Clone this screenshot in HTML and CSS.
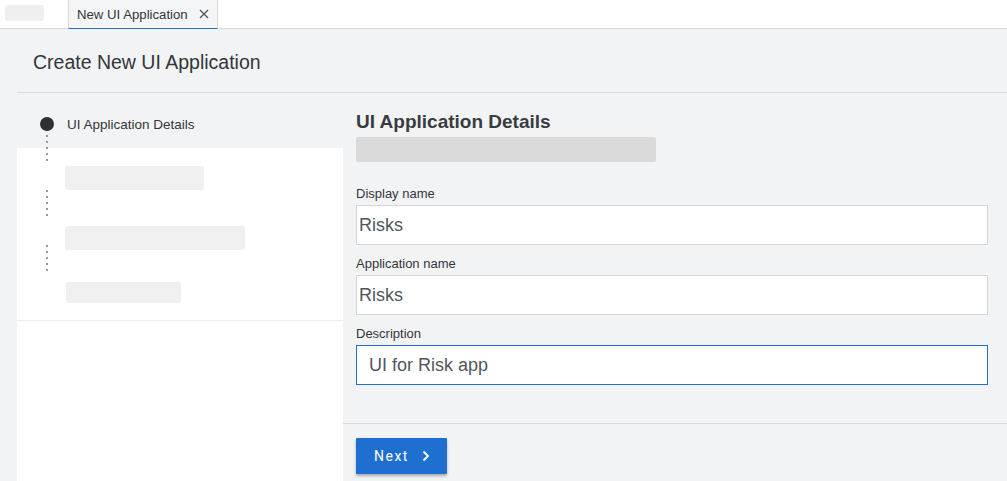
FILE: index.html
```html
<!DOCTYPE html>
<html lang="en">
<head>
<meta charset="utf-8">
<title>Create New UI Application</title>
<link rel="stylesheet" href="styles.css">
</head>
<body>
  <header class="topbar">
    <div class="logo-ph"></div>
    <div class="tab">
      <span class="tab-label">New UI Application</span>
      <svg class="tab-close" width="10" height="10" viewBox="0 0 10 10"><path d="M1 1L9 9M9 1L1 9" stroke="#555" stroke-width="1.3" fill="none"/></svg>
    </div>
  </header>

  <div class="page-head">
    <h1 class="page-title">Create New UI Application</h1>
  </div>

  <main class="main">
    <aside class="steps">
      <div class="step-head">
        <span class="step-dot"></span>
        <span class="step-label">UI Application Details</span>
      </div>
      <div class="step-body">
        <div class="ph ph-1"></div>
        <div class="ph ph-2"></div>
        <div class="ph ph-3"></div>
      </div>
      <div class="step-rest"></div>
      <div class="rail">
        <span class="rail-seg"></span>
        <span class="rail-seg"></span>
        <span class="rail-seg"></span>
      </div>
    </aside>

    <section class="content">
      <div class="form">
        <h2 class="form-title">UI Application Details</h2>
        <div class="ph-sub"></div>
        <div class="field first">
          <label class="label">Display name</label>
          <div class="input">Risks</div>
        </div>
        <div class="field">
          <label class="label">Application name</label>
          <div class="input">Risks</div>
        </div>
        <div class="field">
          <label class="label">Description</label>
          <div class="input focused">UI for Risk app</div>
        </div>
      </div>
      <div class="actions">
        <button class="btn-next">Next
          <svg width="8" height="12" viewBox="0 0 8 12"><path d="M1.5 1.5L6 6L1.5 10.5" stroke="#fff" stroke-width="1.8" fill="none"/></svg>
        </button>
      </div>
    </section>
  </main>
</body>
</html>
```

FILE: styles.css
```css
* { box-sizing: border-box; }
html, body { height: 100%; }
body {
  margin: 0;
  background: #f2f3f5;
  font-family: "Liberation Sans", Arial, sans-serif;
  color: #32363a;
  display: flex;
  flex-direction: column;
  height: 100vh;
  overflow: hidden;
}

.topbar {
  height: 29px;
  flex: none;
  background: #fff;
  border-bottom: 1px solid #d9d9d9;
  display: flex;
  align-items: flex-start;
  padding-left: 5px;
}
.logo-ph {
  width: 39px;
  height: 16px;
  margin-top: 5px;
  background: #efefef;
  border-radius: 3px;
  margin-right: 24px;
}
.tab {
  height: 29px;
  margin-bottom: -1px;
  background: #f4f5f6;
  border-left: 1px solid #d9d9d9;
  border-right: 1px solid #d9d9d9;
  border-bottom: 1px solid #1f6fd1;
  display: flex;
  align-items: center;
  padding: 0 8px 0 8px;
  font-size: 13.2px;
  color: #32363a;
}
.tab-close { margin-left: 11px; }

.page-head {
  height: 63px;
  flex: none;
  display: flex;
  align-items: center;
  padding-left: 33px;
}
.page-title {
  margin: 0;
  font-size: 19.5px;
  font-weight: normal;
  color: #32363a;
  padding-top: 3px;
}

.main {
  flex: 1;
  margin-left: 17px;
  border-top: 1px solid #d9d9d9;
  display: flex;
  min-height: 0;
}

.steps {
  width: 326px;
  flex: none;
  display: flex;
  flex-direction: column;
  position: relative;
}
.step-head {
  height: 55px;
  display: flex;
  align-items: center;
  padding-left: 23px;
  padding-top: 7px;
}
.step-dot {
  width: 14px;
  height: 14px;
  border-radius: 50%;
  background: #2d3035;
  margin-right: 13px;
}
.step-label { font-size: 13.5px; color: #32363a; }
.step-body {
  height: 173px;
  background: #fff;
  border-bottom: 1px solid #eeeeee;
  padding: 18px 0 0 48px;
  display: flex;
  flex-direction: column;
  align-items: flex-start;
}
.step-rest { flex: 1; background: #fff; }
.ph { background: #f0f0f0; border-radius: 2px; }
.ph-1 { width: 139px; height: 24px; }
.ph-2 { width: 180px; height: 24px; margin-top: 36px; }
.ph-3 { width: 115px; height: 21px; margin-top: 32px; margin-left: 1px; }

.rail {
  position: absolute;
  left: 29px;
  top: 40px;
  width: 2px;
  display: flex;
  flex-direction: column;
  gap: 23px;
}
.rail-seg {
  display: block;
  width: 2px;
  height: 32px;
  background-image: radial-gradient(circle, #9a9a9a 0.9px, transparent 1.1px);
  background-size: 2px 6px;
  background-position: 0 0;
}

.content {
  flex: 1;
  display: flex;
  flex-direction: column;
}
.form {
  padding: 18px 19px 38px 13px;
  border-bottom: 1px solid #d9d9d9;
}
.form-title {
  margin: 0;
  font-size: 19px;
  line-height: 22px;
  font-weight: bold;
  color: #383c41;
}
.ph-sub {
  width: 300px;
  height: 25px;
  margin-top: 4px;
  background: #dadada;
  border-radius: 2px;
}
.field { margin-top: 10px; }
.field.first { margin-top: 23px; }
.label {
  display: block;
  font-size: 13px;
  line-height: 18px;
  margin-bottom: 2px;
  color: #32363a;
}
.input {
  height: 40px;
  background: #fff;
  border: 1px solid #d6d6d6;
  display: flex;
  align-items: center;
  padding-left: 2px;
  font-size: 18px;
  color: #50565c;
}
.input.focused {
  border-color: #1f6fd1;
  padding-left: 12px;
}

.actions { padding: 14px 13px; }
.btn-next {
  width: 91px;
  height: 36px;
  border: none;
  background: #1f6fd1;
  color: #fff;
  font-family: Roboto, "Liberation Sans", sans-serif;
  font-size: 14px;
  font-weight: 400;
  letter-spacing: 1.5px;
  display: flex;
  align-items: center;
  padding-left: 18px;
  gap: 13px;
  box-shadow: 0 2px 3px rgba(0,0,0,0.3);
  border-radius: 1px;
}
```
